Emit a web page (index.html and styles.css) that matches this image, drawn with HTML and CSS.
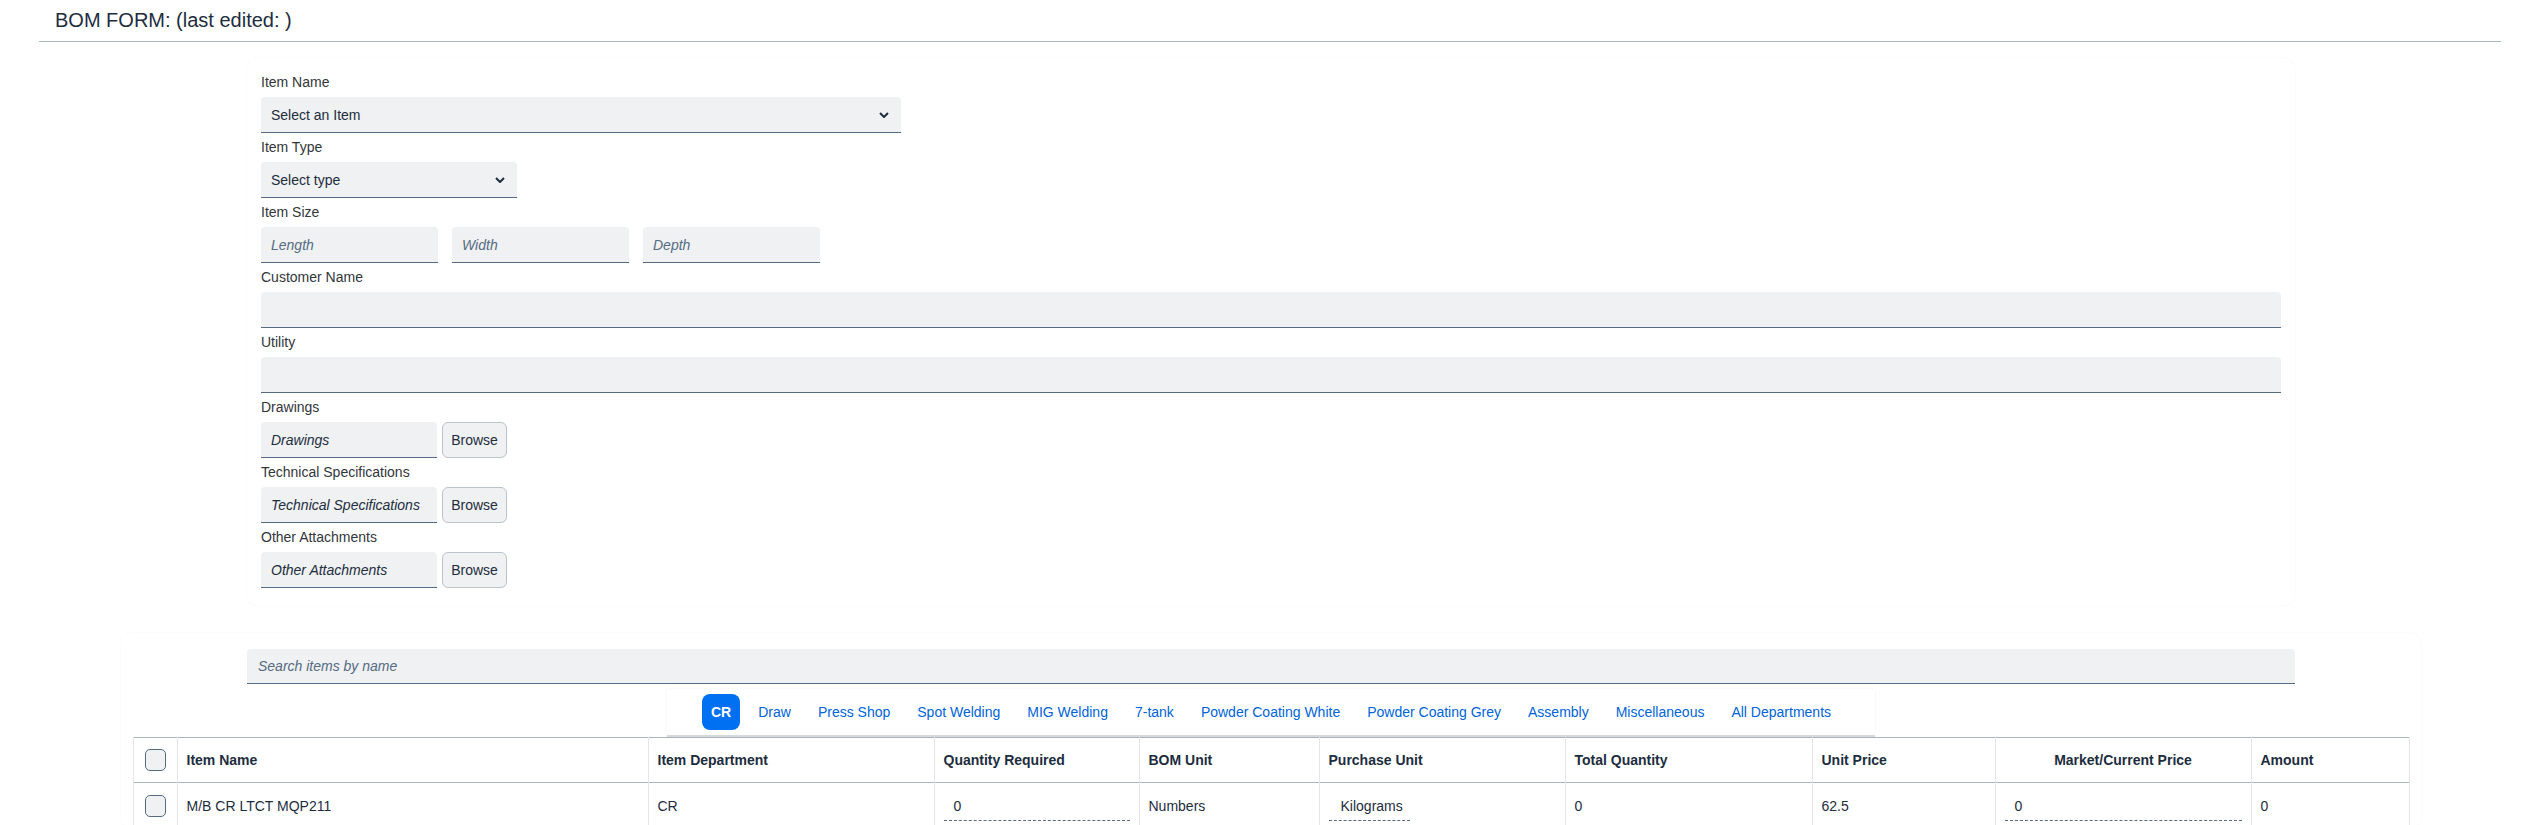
FILE: index.html
```html
<!DOCTYPE html>
<html lang="en">
<head>
<meta charset="utf-8">
<title>BOM Form</title>
<link rel="stylesheet" href="styles.css">
</head>
<body>
<header class="page-header">
  <h1 class="page-title">BOM FORM: (last edited: )</h1>
</header>
<main class="page">
  <section class="card form-card">
    <div class="field">
      <label class="field-label">Item Name</label>
      <div class="control select select-item"><span>Select an Item</span>
        <svg class="chev" viewBox="0 0 10 6" width="10" height="6"><polyline points="1,1 5,5 9,1" fill="none" stroke="#1d2d3e" stroke-width="2"/></svg>
      </div>
    </div>
    <div class="field">
      <label class="field-label">Item Type</label>
      <div class="control select select-type"><span>Select type</span>
        <svg class="chev" viewBox="0 0 10 6" width="10" height="6"><polyline points="1,1 5,5 9,1" fill="none" stroke="#1d2d3e" stroke-width="2"/></svg>
      </div>
    </div>
    <div class="field">
      <label class="field-label">Item Size</label>
      <div class="size-row">
        <div class="control size-input"><span class="placeholder">Length</span></div>
        <div class="control size-input"><span class="placeholder">Width</span></div>
        <div class="control size-input"><span class="placeholder">Depth</span></div>
      </div>
    </div>
    <div class="field">
      <label class="field-label">Customer Name</label>
      <div class="control"></div>
    </div>
    <div class="field">
      <label class="field-label">Utility</label>
      <div class="control"></div>
    </div>
    <div class="field">
      <label class="field-label">Drawings</label>
      <div class="file-row">
        <div class="control file-input"><span class="file-name">Drawings</span></div>
        <button class="browse" type="button">Browse</button>
      </div>
    </div>
    <div class="field">
      <label class="field-label">Technical Specifications</label>
      <div class="file-row">
        <div class="control file-input"><span class="file-name">Technical Specifications</span></div>
        <button class="browse" type="button">Browse</button>
      </div>
    </div>
    <div class="field">
      <label class="field-label">Other Attachments</label>
      <div class="file-row">
        <div class="control file-input"><span class="file-name">Other Attachments</span></div>
        <button class="browse" type="button">Browse</button>
      </div>
    </div>
  </section>

  <section class="card items-card">
    <div class="control search"><span class="placeholder">Search items by name</span></div>
    <nav class="tabs">
      <span class="tab active">CR</span>
      <span class="tab">Draw</span>
      <span class="tab">Press Shop</span>
      <span class="tab">Spot Welding</span>
      <span class="tab">MIG Welding</span>
      <span class="tab">7-tank</span>
      <span class="tab">Powder Coating White</span>
      <span class="tab">Powder Coating Grey</span>
      <span class="tab">Assembly</span>
      <span class="tab">Miscellaneous</span>
      <span class="tab">All Departments</span>
    </nav>
    <table class="bom-table">
      <colgroup>
        <col class="c-check"><col class="c-name"><col class="c-dept"><col class="c-qty"><col class="c-bom"><col class="c-pu"><col class="c-total"><col class="c-price"><col class="c-market"><col class="c-amount">
      </colgroup>
      <thead>
        <tr>
          <th><span class="checkbox"></span></th>
          <th>Item Name</th>
          <th>Item Department</th>
          <th>Quantity Required</th>
          <th>BOM Unit</th>
          <th>Purchase Unit</th>
          <th>Total Quantity</th>
          <th>Unit Price</th>
          <th class="center">Market/Current Price</th>
          <th>Amount</th>
        </tr>
      </thead>
      <tbody>
        <tr>
          <td><span class="checkbox"></span></td>
          <td>M/B CR LTCT MQP211</td>
          <td>CR</td>
          <td><span class="cell-input">0</span></td>
          <td>Numbers</td>
          <td><span class="cell-input cell-select">Kilograms</span></td>
          <td>0</td>
          <td>62.5</td>
          <td><span class="cell-input">0</span></td>
          <td>0</td>
        </tr>
      </tbody>
    </table>
  </section>
</main>
</body>
</html>
```

FILE: styles.css
```css
* { box-sizing: border-box; }

body {
  margin: 0;
  background: #ffffff;
  font-family: "Liberation Sans", Arial, sans-serif;
  color: #1d2d3e;
  font-size: 14px;
}

.page-header {
  margin: 0 41px 0 39px;
  height: 42px;
  padding-left: 16px;
  border-bottom: 1px solid #a9b4be;
}

.page-title {
  margin: 0;
  font-size: 20px;
  font-weight: normal;
  line-height: 41px;
  color: #1d2d3e;
}

.card {
  background: #ffffff;
  border-radius: 12px;
  box-shadow: 0 0 2px rgba(0, 0, 0, 0.06);
  margin-left: auto;
  margin-right: auto;
}

.form-card {
  width: 2048px;
  margin-top: 16px;
  padding: 14px 14px 14px;
}

.field { margin-bottom: 4px; }

.field-label {
  display: block;
  font-size: 14px;
  line-height: 20px;
  margin-bottom: 5px;
  color: #32363a;
}

.control {
  height: 36px;
  background: #eff1f2;
  border-radius: 4px 4px 0 0;
  border-bottom: 1px solid #556b82;
  display: flex;
  align-items: center;
  padding: 0 10px;
  font-size: 14px;
  color: #1d2d3e;
}

.select { justify-content: space-between; }
.select-item { width: 640px; }
.select-type { width: 256px; }
.chev { margin-right: 2px; }

.size-row { display: flex; gap: 14px; }
.size-input { width: 177px; }

.placeholder {
  font-style: italic;
  color: #556b82;
}

.file-row { display: flex; gap: 5px; align-items: flex-start; }
.file-input { width: 176px; }
.file-name { font-style: italic; color: #1d2d3e; white-space: nowrap; }

.browse {
  width: 65px;
  height: 36px;
  padding: 0;
  background: #eff1f2;
  border: 1px solid #bcc3ca;
  border-radius: 6px;
  font-family: "Liberation Sans", Arial, sans-serif;
  font-size: 14px;
  color: #1d2d3e;
}

.items-card {
  width: 2300px;
  margin-top: 27px;
  padding-top: 16px;
}

.search {
  width: 2048px;
  height: 35px;
  margin: 0 auto;
  padding-left: 11px;
}

.tabs {
  width: fit-content;
  height: 48px;
  margin: 5px auto 0;
  padding: 0 35px;
  display: flex;
  align-items: center;
  gap: 9px;
  background: #ffffff;
  border-bottom: 2px solid #d5d9dc;
  box-shadow: 0 0 2px rgba(0, 0, 0, 0.07);
}

.tab {
  height: 36px;
  line-height: 36px;
  padding: 0 9px;
  border-radius: 8px;
  font-size: 14px;
  color: #0064d9;
  white-space: nowrap;
}

.tab.active {
  background: #0070f2;
  color: #ffffff;
  font-weight: bold;
}

.bom-table {
  width: 2276px;
  margin: 0 auto;
  border-collapse: collapse;
  table-layout: fixed;
  font-size: 14px;
}

.c-check { width: 44px; }
.c-name { width: 471px; }
.c-dept { width: 286px; }
.c-qty { width: 205px; }
.c-bom { width: 180px; }
.c-pu { width: 246px; }
.c-total { width: 247px; }
.c-price { width: 183px; }
.c-market { width: 256px; }
.c-amount { width: 158px; }

.bom-table th,
.bom-table td {
  border-left: 1px solid #e5e5e5;
  border-right: 1px solid #e5e5e5;
  padding: 0 9px;
  text-align: left;
  white-space: nowrap;
  color: #1d2d3e;
}

.bom-table thead tr {
  border-top: 1px solid #a9b4be;
  border-bottom: 1px solid #a9b4be;
}

.bom-table th {
  height: 45px;
  font-weight: bold;
}

.bom-table th.center { text-align: center; }

.bom-table td {
  height: 46px;
}

.checkbox {
  display: block;
  width: 21px;
  height: 22px;
  margin: 0 auto;
  border: 1px solid #556b82;
  border-radius: 5px;
  background: #eff1f2;
}

.cell-input {
  display: block;
  height: 30px;
  line-height: 30px;
  padding-left: 10px;
  border-bottom: 1px dashed #556b82;
}

.cell-select {
  display: inline-block;
  padding: 0 7px 0 12px;
}
```
